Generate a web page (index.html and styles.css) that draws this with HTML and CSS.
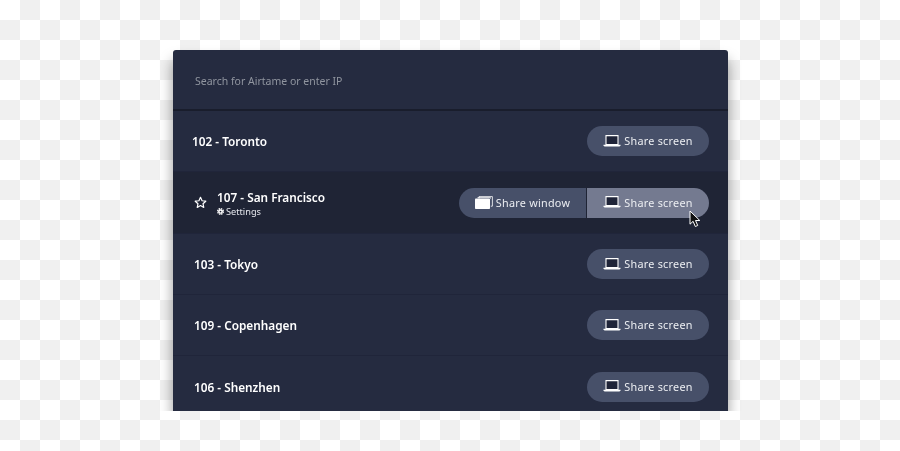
FILE: index.html
```html
<!DOCTYPE html>
<html lang="en">
<head>
    <meta charset="UTF-8">
    <title>Airtame</title>
    <link rel="stylesheet" href="styles.css">
</head>
<body>
    <svg class="icon-defs" width="0" height="0">
        <symbol id="laptop" viewBox="0 0 17 12">
            <path d="M2.5 .6h12v8.9h-12z" fill="#1f2438" stroke="#fff" stroke-width="1.1"/>
            <path d="M0 9.8h17v.7l-1 .9H1l-1-.9z" fill="#fff"/>
        </symbol>
    </svg>
    <div class="panel">
        <div class="search">Search for Airtame or enter IP</div>

        <div class="row row-first">
            <div class="name">102 - Toronto</div>
            <button class="share"><svg class="laptop"><use href="#laptop"/></svg>Share screen</button>
        </div>

        <div class="row row-active">
            <div class="room">
                <svg class="star" viewBox="0 0 14 14"><path d="M7 1.4l1.7 3.7 4 .5-3 2.7.8 4L7 10.3l-3.5 2 .8-4-3-2.7 4-.5z" fill="none" stroke="#fff" stroke-width="1.3" stroke-linejoin="round"/></svg>
                <div>
                    <div class="name">107 - San Francisco</div>
                    <div class="settings">
                        <svg class="gear" viewBox="0 0 8 8"><circle cx="4" cy="4" r="3.2" fill="none" stroke="#fff" stroke-width="1.6" stroke-dasharray="1.6 .9"/><circle cx="4" cy="4" r="2.7" fill="#fff"/><circle cx="4" cy="4" r="1" fill="#1f2435"/></svg>Settings
                    </div>
                </div>
            </div>
            <div class="split">
                <button class="share share-window">
                    <svg class="window" viewBox="0 0 18 13"><path d="M4 2.5V.6h13.4v9.6h-1.6" fill="none" stroke="#fff" stroke-width=".8"/><path d="M2.5 1.6h13v1" fill="none" stroke="#fff" stroke-width=".8"/><rect y="2.6" width="15" height="10.4" rx=".8" fill="#fff"/></svg>Share window
                </button>
                <button class="share share-hover"><svg class="laptop"><use href="#laptop"/></svg>Share screen</button>
            </div>
            <svg class="cursor" viewBox="0 0 12 18"><path d="M1 1v13.2l3.1-2.9 2.2 5.2 2.4-1-2.2-5h4.3z" fill="#111" stroke="#fff" stroke-width="1"/></svg>
        </div>

        <div class="row">
            <div class="name">103 - Tokyo</div>
            <button class="share"><svg class="laptop"><use href="#laptop"/></svg>Share screen</button>
        </div>

        <div class="row">
            <div class="name">109 - Copenhagen</div>
            <button class="share"><svg class="laptop"><use href="#laptop"/></svg>Share screen</button>
        </div>

        <div class="row row-last">
            <div class="name">106 - Shenzhen</div>
            <button class="share"><svg class="laptop"><use href="#laptop"/></svg>Share screen</button>
        </div>
    </div>
</body>
</html>
```

FILE: styles.css
```css
* {
    margin: 0;
    padding: 0;
    box-sizing: border-box;
}

html, body {
    height: 100%;
    overflow: hidden;
}

body {
    padding-top: 50px;
    font-family: "Noto Sans", Arial, sans-serif;
    background-color: #fff;
    background-image: conic-gradient(#f0f0f0 25%, #fff 0 50%, #f0f0f0 0 75%, #fff 0);
    background-size: 40px 40px;
}

.icon-defs {
    position: absolute;
}

.panel {
    width: 555px;
    height: 361px;
    margin-left: 173px;
    overflow: hidden;
    background-color: #252b40;
    border-radius: 3px 3px 0 0;
    box-shadow: 0 10px 14px rgba(0, 0, 0, 0.4);
    clip-path: inset(-14px -14px 0 -14px);
    filter: blur(0.3px);
}

.search {
    height: 61px;
    padding: 22px 22px 0;
    font-size: 10.5px;
    line-height: 18px;
    color: #90959f;
    border-bottom: 2px solid #191d2c;
}

.row {
    position: relative;
    display: flex;
    align-items: center;
    justify-content: space-between;
    height: 61px;
    padding: 0 19px 0 21px;
    border-bottom: 1px solid #20253a;
}

.row-first {
    padding-left: 19px;
}

.row-active {
    height: 62px;
    padding-left: 21px;
    background-color: #1f2435;
}

.row-last {
    border-bottom: none;
}

.name {
    font-size: 11.8px;
    font-weight: 600;
    line-height: 18px;
    color: #fff;
}

.room {
    display: flex;
    align-items: center;
    gap: 10px;
}

.star {
    width: 13px;
    height: 13px;
}

.settings {
    display: flex;
    align-items: center;
    gap: 2px;
    font-size: 9.2px;
    line-height: 12px;
    color: #e4e6ec;
}

.gear {
    width: 7px;
    height: 7px;
}

.share {
    display: flex;
    align-items: center;
    justify-content: center;
    gap: 3px;
    width: 122px;
    height: 30px;
    padding-bottom: 1px;
    border: none;
    border-radius: 15px;
    font-family: inherit;
    font-size: 10.8px;
    letter-spacing: 0.27px;
    color: #eceef2;
    background-color: #475069;
}

.laptop {
    width: 18px;
    height: 12px;
}

.window {
    width: 18px;
    height: 13px;
}

.split {
    display: flex;
    gap: 1px;
}

.share-window {
    width: 127px;
    border-radius: 15px 0 0 15px;
}

.share-hover {
    border-radius: 0 15px 15px 0;
    background-color: #747a90;
}

.cursor {
    position: absolute;
    top: 38px;
    left: 516px;
    width: 12px;
    height: 18px;
}
```
